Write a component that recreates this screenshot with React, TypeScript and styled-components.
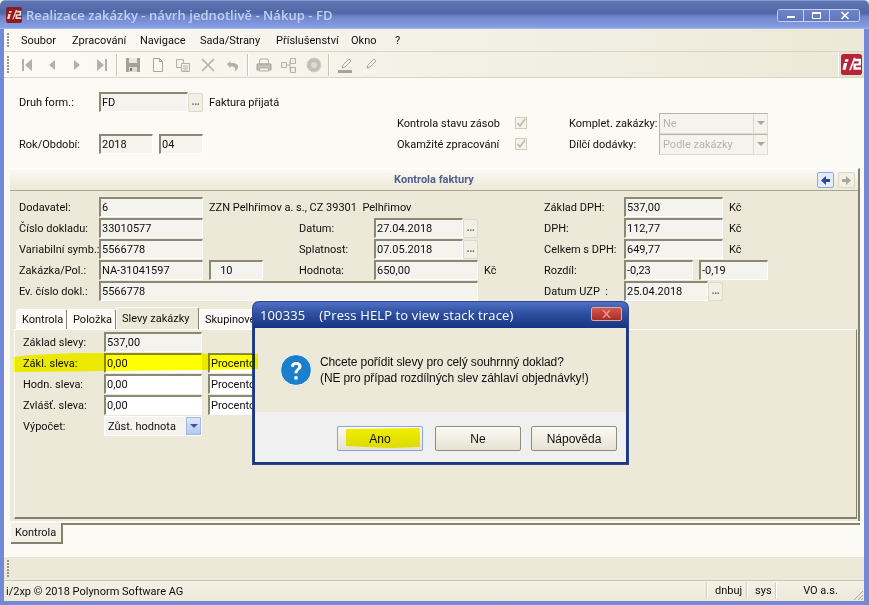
import React from 'react';
import styled, { createGlobalStyle } from 'styled-components';

const Global = createGlobalStyle`
  html, body { margin: 0; padding: 0; overflow: hidden; background: #ece9d8; }
  * { box-sizing: border-box; }
`;

const FONT = `Roboto, "Liberation Sans", sans-serif`;
const DIALOG_FONT = `"Liberation Sans", Arial, sans-serif`;
const FACE = '#ece9d8';
const CREAM = '#fbfaf5';

const Window = styled.div`
  position: relative;
  width: 869px;
  height: 605px;
  display: flex;
  flex-direction: column;
  padding: 0 5px 4px 4px;
  background: #7189d6;
  border-radius: 6px 6px 0 0;
  overflow: hidden;
  font: 11px ${FONT};
  color: #0e0e0e;
`;

const TitleBar = styled.div`
  height: 29px;
  margin: 0 -5px 0 -4px;
  padding: 0 9px 0 6px;
  display: flex;
  align-items: center;
  gap: 4px;
  background: linear-gradient(#5f75b4 0, #5067a6 12px, #6d86cc 16px, #89a0e6 100%);
  border-top: 1px solid #8a9ad0;
  border-bottom: 1px solid #a4b6ec;
`;

const TitleText = styled.div`
  font: 600 13px "Open Sans", sans-serif;
  letter-spacing: 0.05px;
  color: #c3cff2;
  flex: 1;
  white-space: nowrap;
`;

const WindowButtons = styled.div`
  display: flex;
  height: 13px;
  margin-top: 1px;
  border: 1px solid #c6d1f2;
  border-radius: 3px;
  overflow: hidden;
`;

const WindowButton = styled.div<{ $w: number }>`
  width: ${p => p.$w}px;
  display: flex;
  align-items: center;
  justify-content: center;
  background: linear-gradient(#6d84c6, #6078bc);
  & + & { border-left: 1px solid #c6d1f2; }
`;

const MenuBar = styled.div`
  height: 23px;
  display: flex;
  align-items: center;
  background: linear-gradient(90deg, #fbfaf5, #ece9d8);
  border-bottom: 1px solid #d8d5c2;
  padding-left: 3px;
`;

const Grip = styled.div<{ $h: number }>`
  width: 3px;
  height: ${p => p.$h}px;
  background: radial-gradient(circle at 1px 1px, #9a9889 1px, transparent 1.2px) 0 0 / 3px 3px;
  flex: none;
`;

const MenuItem = styled.div<{ $w: number }>`
  width: ${p => p.$w}px;
  white-space: nowrap;
`;

const MenuList = styled.div`
  display: flex;
  margin-left: 11px;
`;

const ToolBar = styled.div`
  height: 26px;
  display: flex;
  align-items: center;
  background: linear-gradient(90deg, #fbfaf5, #ece9d8);
  border-bottom: 1px solid #d8d5c2;
  padding-left: 3px;
`;

const ToolGroup = styled.div<{ $indent?: number }>`
  display: flex;
  align-items: center;
  margin-left: ${p => p.$indent ?? 0}px;
`;

const ToolIcon = styled.div`
  width: 25px;
  height: 24px;
  display: flex;
  align-items: center;
  justify-content: center;
`;

const ToolSep = styled.div`
  width: 2px;
  height: 22px;
  margin: 0 2px;
  background: #c9c6b3;
  border-right: 1px solid #fff;
`;

const ToolEnd = styled.div`
  margin-left: auto;
  width: 26px;
  height: 25px;
  display: flex;
  align-items: center;
  justify-content: center;
  border-left: 1px solid #fff;
  background: #e4e1cf;
`;

const Content = styled.div`
  flex: 1;
  min-height: 0;
  background: ${CREAM};
  padding-top: 14px;
  display: flex;
  flex-direction: column;
`;

const TopForm = styled.div`
  display: grid;
  margin-left: 15px;
  grid-template-columns: 80px 298px 172px 90px 109px;
  grid-template-rows: repeat(3, 21px);
`;

const Slot = styled.div<{ $col: string; $row?: number }>`
  grid-column: ${p => p.$col};
  ${p => (p.$row ? `grid-row: ${p.$row};` : '')}
  height: 20px;
  display: flex;
  align-items: center;
  gap: 6px;
  white-space: pre;
  min-width: 0;
`;

const Field = styled.div<{ $w?: number; $bg?: string }>`
  ${p => (p.$w ? `width: ${p.$w}px;` : 'flex: 1;')}
  height: 20px;
  min-width: 0;
  flex-shrink: 0;
  padding-left: 1px;
  display: flex;
  align-items: center;
  background: ${p => p.$bg ?? '#f4f3ee'};
  border-style: solid;
  border-width: 2px 1px 1px 2px;
  border-color: #8b8976 #fff #fff #8b8976;
  white-space: pre;
  overflow: hidden;
`;

const LookupWrap = styled.div<{ $w?: number }>`
  ${p => (p.$w ? `width: ${p.$w}px;` : 'flex: 1;')}
  display: flex;
  height: 20px;
  flex-shrink: 0;
`;

const LookupButton = styled.div`
  width: 15px;
  height: 19px;
  margin-top: 1px;
  flex: none;
  background: #f1efe6;
  border: 1px solid #dcd9c8;
  border-radius: 2px;
  color: #77756a;
  font-size: 11px;
  font-weight: bold;
  line-height: 16px;
  text-align: center;
  letter-spacing: -0.5px;
`;

const CheckLine = styled.div`
  width: 112px;
  white-space: nowrap;
  flex: none;
`;

const CheckBox = styled.div`
  width: 12px;
  height: 12px;
  border: 1px solid #cfccba;
  background: #f4f3ee;
  flex: none;
  display: flex;
  align-items: center;
  justify-content: center;
`;

const DisabledSelect = styled.div`
  width: 109px;
  height: 21px;
  display: flex;
  align-items: center;
  padding-left: 3px;
  color: #b7b5a8;
  background: #f4f3ee;
  border-style: solid;
  border-width: 1px;
  border-color: #b7b4a0 #e0ddcc #e0ddcc #b7b4a0;
  justify-content: space-between;
`;

const DisabledArrow = styled.div`
  width: 14px;
  height: 19px;
  border-left: 1px solid #dcd9c8;
  display: flex;
  align-items: center;
  justify-content: center;
  &::after {
    content: '';
    border: 4px solid transparent;
    border-top: 4px solid #aaa896;
    margin-top: 4px;
  }
`;

const Panel = styled.div`
  margin: 13px 4px 0 6px;
  height: 353px;
  flex: none;
  background: ${FACE};
  border-right: 2px solid #84826f;
  border-top: 1px solid #fff;
`;

const PanelHeader = styled.div`
  height: 22px;
  position: relative;
  display: flex;
  align-items: center;
  justify-content: center;
  background: linear-gradient(#fbfaf5, #ece9d8);
  border-bottom: 1px solid #a9a793;
  font-weight: bold;
  color: #53608c;
`;

const HeaderNav = styled.div`
  position: absolute;
  right: 3px;
  top: 3px;
  display: flex;
  gap: 4px;
`;

const NavButton = styled.div<{ $active?: boolean }>`
  width: 17px;
  height: 16px;
  display: flex;
  align-items: center;
  justify-content: center;
  border: 1px solid ${p => (p.$active ? '#8faadc' : '#dcd9c8')};
  background: ${p => (p.$active ? '#e4ecfa' : '#f1efe6')};
  border-radius: 2px;
`;

const InvoiceForm = styled.div`
  display: grid;
  margin: 6px 0 0 9px;
  grid-template-columns: 80px 104px 6px 54px 36px 75px 104px 6px 60px 80px 69px 6px 24px 6px 39px;
  grid-template-rows: repeat(5, 21px);
`;

const TabStrip = styled.div`
  display: flex;
  align-items: flex-end;
  height: 22px;
  margin: 5px 0 0 6px;
`;

const Tab = styled.div<{ $active?: boolean; $w: number }>`
  width: ${p => p.$w}px;
  height: ${p => (p.$active ? 22 : 20)}px;
  padding: 0 0 1px 5px;
  display: flex;
  align-items: center;
  white-space: nowrap;
  background: ${p => (p.$active ? FACE : CREAM)};
  border-top: 1px solid #fff;
  border-left: 1px solid #fff;
  border-right: 1px solid #84826f;
  border-radius: 3px 3px 0 0;
`;

const TabPage = styled.div`
  margin: 0 1px 0 4px;
  height: 190px;
  padding: 2px 0 0 8px;
  border-left: 1px solid #fff;
  border-top: 1px solid #fff;
  border-right: 1px solid #84826f;
  border-bottom: 2px solid #84826f;
  display: grid;
  grid-template-columns: 81px 98px 6px 100px;
  grid-template-rows: repeat(5, 21px);
`;

const DropSelect = styled.div`
  width: 98px;
  height: 20px;
  display: flex;
  align-items: center;
  justify-content: space-between;
  padding-left: 3px;
  background: #f4f3ee;
  border: 1px solid #fff;
`;

const DropArrow = styled.div`
  width: 15px;
  height: 18px;
  display: flex;
  align-items: center;
  justify-content: center;
  background: linear-gradient(#dfe8fb, #b5c8f2);
  border: 1px solid #a4b8e4;
  &::after {
    content: '';
    border: 4px solid transparent;
    border-top: 4px solid #3d5696;
    margin-top: 4px;
  }
`;

const BottomTabs = styled.div`
  height: 22px;
  margin: 2px 4px 0 7px;
  display: flex;
  flex: none;
`;

const BottomTab = styled.div`
  width: 52px;
  height: 21px;
  padding-left: 4px;
  display: flex;
  align-items: center;
  background: #f3f1e7;
  border-right: 2px solid #84826f;
  border-bottom: 2px solid #84826f;
`;

const BottomRule = styled.div`
  flex: 1;
  height: 2px;
  background: #84826f;
`;

const Band = styled.div`
  height: 25px;
  flex: none;
  padding: 3px 0 0 3px;
  background: ${FACE};
  border-top: 1px solid #fff;
  border-bottom: 1px solid #c9c6b3;
`;

const StatusBar = styled.div`
  height: 20px;
  flex: none;
  display: flex;
  align-items: center;
  padding-left: 2px;
  position: relative;
  background: linear-gradient(#f4f2e8, #ece9d8);
`;

const StatusCopy = styled.div`
  flex: 1;
`;

const StatusCell = styled.div<{ $w: number; $center?: boolean }>`
  width: ${p => p.$w}px;
  height: 16px;
  line-height: 15px;
  border-left: 1px solid #fff;
  box-shadow: -1px 0 0 #d0cdba;
  text-align: ${p => (p.$center ? 'center' : 'left')};
  padding-left: ${p => (p.$center ? 0 : 7)}px;
`;

const SizeGrip = styled.svg`
  position: absolute;
  right: 0;
  bottom: 0;
`;

const Dialog = styled.div`
  position: absolute;
  left: 253px;
  top: 302px;
  width: 375px;
  height: 162px;
  display: flex;
  flex-direction: column;
  background: #1d3880;
  border-radius: 6px 6px 0 0;
  box-shadow: 0 0 0 1px #30468e;
  padding: 0 2px 2px;
  z-index: 5;
  font: 12px ${DIALOG_FONT};
`;

const DialogTitle = styled.div`
  height: 26px;
  flex: none;
  margin: 0 -2px;
  padding: 0 6px 0 7px;
  display: flex;
  align-items: center;
  justify-content: space-between;
  border-radius: 6px 6px 0 0;
  background: linear-gradient(#4f70c6, #2e4f9e 45%, #173384);
`;

const DialogCaption = styled.div`
  color: #fff;
  font: 500 13px "Open Sans", sans-serif;
  letter-spacing: 0.12px;
  white-space: pre;
`;

const CloseButton = styled.div`
  width: 31px;
  height: 14px;
  margin-top: -2px;
  border-radius: 2px;
  border: 1px solid #e0a8a0;
  display: flex;
  align-items: center;
  justify-content: center;
  background: linear-gradient(#d25a50, #a82c22);
`;

const DialogBody = styled.div`
  height: 84px;
  flex: none;
  display: flex;
  align-items: center;
  gap: 8px;
  padding-left: 25px;
  background: ${FACE};
`;

const DialogText = styled.div`
  line-height: 16px;
  white-space: nowrap;
  letter-spacing: -0.11px;
`;

const DialogFooter = styled.div`
  flex: 1;
  display: flex;
  justify-content: flex-end;
  padding: 14px 9px 0 0;
  background: #f0f0f0;
`;

const DialogButton = styled.div<{ $default?: boolean; $gap?: number }>`
  width: 86px;
  height: 25px;
  margin-right: ${p => p.$gap ?? 0}px;
  display: flex;
  align-items: center;
  justify-content: center;
  border-radius: 2px;
  border: 1px solid ${p => (p.$default ? '#8aa4d8' : '#8e8c7c')};
  background: linear-gradient(#fbfaf4, #e6e3d4);
`;

const Marker = styled.svg<{ $x: number; $y: number }>`
  position: absolute;
  left: ${p => p.$x}px;
  top: ${p => p.$y}px;
  mix-blend-mode: multiply;
  z-index: 6;
  pointer-events: none;
`;

const Logo = ({ size, bg, fg = '#fff' }: { size: number; bg: string; fg?: string }) => (
  <svg width={size} height={size} viewBox="0 0 22 22">
    <rect width="22" height="22" rx="3" fill={bg} />
    <path d="M3 9.5h3.5l-1.6 7H1.500zM4.500 5.500H8L7.400 8H3.900zM8.500 17l5-13h1.800l-5 13z" fill={fg} />
    <path d="M13.500 5H21v7h-5.500v2H21v2.500h-8V10h5.500V7.500h-5z" fill={fg} />
  </svg>
);

const Gray = '#b3b1a6';

const iconPaths: Record<string, React.ReactNode> = {
  first: <path d="M3 2h2v12H3zM13 2v12L6 8z" fill={Gray} />,
  prev: <path d="M11 3v10L5 8z" fill={Gray} />,
  next: <path d="M5 3v10l6-5z" fill={Gray} />,
  last: <path d="M3 2v12l7-6zM11 2h2v12h-2z" fill={Gray} />,
  save: (
    <>
      <path d="M1 1h14v14H1z" fill="#a4a298" />
      <path d="M4 1h8v5H4z" fill="#e9e8e0" />
      <path d="M4 10h8v5H4z" fill="#dedcd2" />
      <path d="M5 11h2v3H5z" fill="#77756b" />
    </>
  ),
  doc: <path d="M3.500 1.500h6l3 3v10h-9zM9.500 1.500v3h3" fill="#fbfbf6" stroke="#a8a69a" />,
  copy: (
    <>
      <path d="M1.500 2.500h7v8h-7z" fill="#f5f4ee" stroke={Gray} />
      <path d="M6.500 6.500h8v8h-8z" fill="#f5f4ee" stroke={Gray} />
      <path d="M8 9h5M8 11h5M8 13h5" stroke={Gray} />
    </>
  ),
  cross: <path d="M2 2l12 12M14 2L2 14" stroke={Gray} strokeWidth="1.6" fill="none" />,
  undo: <path d="M2 7l3.500-3v2C10 5.500 13.500 7 13 10.500c-.3 2-1.500 3-3.500 3.800 1.500-1.500 1.600-5-4-5v2z" fill={Gray} />,
  print: (
    <>
      <path d="M4 2h8l1 5H3z" fill="#f2f1ea" stroke={Gray} />
      <path d="M1 7h14v6H1z" fill="#c2c0b5" stroke="#a6a49a" />
      <path d="M3.500 11h9v3h-9z" fill="#f2f1ea" stroke={Gray} />
    </>
  ),
  tree: (
    <>
      <path d="M5 8h4M9 4v9" stroke={Gray} />
      <path d="M.5 5.500h5v5h-5zM9.500 1.500h5v5h-5zM9.500 10.500h5v5h-5z" fill="#f0efe8" stroke={Gray} />
    </>
  ),
  gear: (
    <>
      <circle cx="8" cy="8" r="7" fill="#c2c0b5" stroke="#d2d0c5" strokeDasharray="2 1" />
      <circle cx="8" cy="8" r="3" fill="#dedcd2" />
    </>
  ),
  pencilDark: (
    <>
      <path d="M1 13h14v3H1z" fill="#a6a498" />
      <path d="M5 11l1-3 6-6 2 2-6 6z" fill="#f4f3ec" stroke="#97958a" strokeWidth=".8" />
    </>
  ),
  pencilLight: (
    <>
      <path d="M1 13h14v3H1z" fill="#f8f8f3" />
      <path d="M5 11l1-3 6-6 2 2-6 6z" fill="#f4f3ec" stroke="#97958a" strokeWidth=".8" />
    </>
  ),
};

const ToolButton = ({ name, size = 16 }: { name: string; size?: number }) => (
  <ToolIcon>
    <svg width={size} height={size} viewBox="0 0 16 16">{iconPaths[name]}</svg>
  </ToolIcon>
);

const Check = () => (
  <svg width="10" height="10" viewBox="0 0 10 10">
    <path d="M1.500 5l2.500 3 5-7" fill="none" stroke="#bdbaa8" strokeWidth="1.6" />
  </svg>
);

const Lookup = ({ value, w }: { value: string; w?: number }) => (
  <LookupWrap $w={w}>
    <Field>{value}</Field>
    <LookupButton>...</LookupButton>
  </LookupWrap>
);

const menus: [string, number][] = [
  ['Soubor', 51], ['Zpracování', 68], ['Navigace', 60], ['Sada/Strany', 76],
  ['Příslušenství', 75], ['Okno', 44], ['?', 10],
];

export default function App() {
  return (
    <Window>
      <Global />
      <TitleBar>
        <Logo size={16} bg="#8e1a22" fg="#ecd9cc" />
        <TitleText>Realizace zakázky - návrh jednotlivě - Nákup - FD</TitleText>
        <WindowButtons>
          <WindowButton $w={25}>
            <svg width="10" height="8"><rect x="1" y="5" width="8" height="2" fill="#fff" /></svg>
          </WindowButton>
          <WindowButton $w={26}>
            <svg width="11" height="9"><path d="M1.500 1.500h8v6h-8z" fill="none" stroke="#fff" /><path d="M1 1h9v2H1z" fill="#fff" /></svg>
          </WindowButton>
          <WindowButton $w={30}>
            <svg width="10" height="9"><path d="M1.500 1l7 7M8.500 1l-7 7" stroke="#fff" strokeWidth="1.6" /></svg>
          </WindowButton>
        </WindowButtons>
      </TitleBar>

      <MenuBar>
        <Grip $h={15} />
        <MenuList>
          {menus.map(([label, w]) => <MenuItem key={label} $w={w}>{label}</MenuItem>)}
        </MenuList>
      </MenuBar>

      <ToolBar>
        <Grip $h={18} />
        <ToolGroup $indent={4}>
          {['first', 'prev', 'next', 'last'].map(n => <ToolButton key={n} name={n} />)}
        </ToolGroup>
        <ToolSep />
        <ToolGroup>
          {['save', 'doc', 'copy', 'cross', 'undo'].map(n => <ToolButton key={n} name={n} />)}
        </ToolGroup>
        <ToolSep />
        <ToolGroup>
          {['print', 'tree', 'gear'].map(n => <ToolButton key={n} name={n} />)}
        </ToolGroup>
        <ToolSep />
        <ToolGroup>
          {['pencilDark', 'pencilLight'].map(n => <ToolButton key={n} name={n} />)}
        </ToolGroup>
        <ToolEnd><Logo size={21} bg="#b7243a" /></ToolEnd>
      </ToolBar>

      <Content>
        <TopForm>
          <Slot $col="1" $row={1}>Druh form.:</Slot>
          <Slot $col="2" $row={1}>
            <Lookup value="FD" w={104} />
            Faktura přijatá
          </Slot>
          <Slot $col="3" $row={2}><CheckLine>Kontrola stavu zásob</CheckLine><CheckBox><Check /></CheckBox></Slot>
          <Slot $col="4" $row={2}>Komplet. zakázky:</Slot>
          <Slot $col="5" $row={2}><DisabledSelect>Ne<DisabledArrow /></DisabledSelect></Slot>
          <Slot $col="1" $row={3}>Rok/Období:</Slot>
          <Slot $col="2" $row={3}><Field $w={54}>2018</Field><Field $w={44}>04</Field></Slot>
          <Slot $col="3" $row={3}><CheckLine>Okamžité zpracování</CheckLine><CheckBox><Check /></CheckBox></Slot>
          <Slot $col="4" $row={3}>Dílčí dodávky:</Slot>
          <Slot $col="5" $row={3}><DisabledSelect>Podle zakázky<DisabledArrow /></DisabledSelect></Slot>
        </TopForm>

        <Panel>
          <PanelHeader>
            Kontrola faktury
            <HeaderNav>
              <NavButton $active>
                <svg width="11" height="11"><path d="M6 1v3h4v3H6v3L1 5.500z" fill="#27489c" /></svg>
              </NavButton>
              <NavButton>
                <svg width="11" height="11"><path d="M5 1v3H1v3h4v3l5-4.500z" fill="#aaa896" /></svg>
              </NavButton>
            </HeaderNav>
          </PanelHeader>

          <InvoiceForm>
            <Slot $col="1">Dodavatel:</Slot>
            <Slot $col="2"><Field>6</Field></Slot>
            <Slot $col="4 / 8">ZZN Pelhřimov a. s., CZ 39301  Pelhřimov</Slot>
            <Slot $col="10">Základ DPH:</Slot>
            <Slot $col="11 / 14"><Field>537,00</Field></Slot>
            <Slot $col="15">Kč</Slot>

            <Slot $col="1">Číslo dokladu:</Slot>
            <Slot $col="2"><Field>33010577</Field></Slot>
            <Slot $col="6">Datum:</Slot>
            <Slot $col="7"><Lookup value="27.04.2018" /></Slot>
            <Slot $col="10">DPH:</Slot>
            <Slot $col="11 / 14"><Field>112,77</Field></Slot>
            <Slot $col="15">Kč</Slot>

            <Slot $col="1">Variabilní symb.:</Slot>
            <Slot $col="2"><Field>5566778</Field></Slot>
            <Slot $col="6">Splatnost:</Slot>
            <Slot $col="7"><Lookup value="07.05.2018" /></Slot>
            <Slot $col="10">Celkem s DPH:</Slot>
            <Slot $col="11 / 14"><Field>649,77</Field></Slot>
            <Slot $col="15">Kč</Slot>

            <Slot $col="1">Zakázka/Pol.:</Slot>
            <Slot $col="2"><Field>NA-31041597</Field></Slot>
            <Slot $col="4"><Field>{'   10'}</Field></Slot>
            <Slot $col="6">Hodnota:</Slot>
            <Slot $col="7"><Field>650,00</Field></Slot>
            <Slot $col="9">Kč</Slot>
            <Slot $col="10">Rozdíl:</Slot>
            <Slot $col="11"><Field>-0,23</Field></Slot>
            <Slot $col="13 / 16"><Field>-0,19</Field></Slot>

            <Slot $col="1">Ev. číslo dokl.:</Slot>
            <Slot $col="2 / 8"><Field>5566778</Field></Slot>
            <Slot $col="10">Datum UZP  :</Slot>
            <Slot $col="11 / 14"><Lookup value="25.04.2018" /></Slot>
          </InvoiceForm>

          <TabStrip>
            <Tab $w={51}>Kontrola</Tab>
            <Tab $w={49}>Položka</Tab>
            <Tab $w={83} $active>Slevy zakázky</Tab>
            <Tab $w={60}>Skupinové</Tab>
          </TabStrip>
          <TabPage>
            <Slot $col="1">Základ slevy:</Slot>
            <Slot $col="2"><Field>537,00</Field></Slot>

            <Slot $col="1">Zákl. sleva:</Slot>
            <Slot $col="2"><Field $bg="#fff">0,00</Field></Slot>
            <Slot $col="4"><Field $bg="#fff">Procento</Field></Slot>

            <Slot $col="1">Hodn. sleva:</Slot>
            <Slot $col="2"><Field $bg="#fff">0,00</Field></Slot>
            <Slot $col="4"><Field $bg="#fff">Procento</Field></Slot>

            <Slot $col="1">Zvlášť. sleva:</Slot>
            <Slot $col="2"><Field $bg="#fff">0,00</Field></Slot>
            <Slot $col="4"><Field $bg="#fff">Procento</Field></Slot>

            <Slot $col="1">Výpočet:</Slot>
            <Slot $col="2"><DropSelect>Zůst. hodnota<DropArrow /></DropSelect></Slot>
          </TabPage>
        </Panel>

        <BottomTabs>
          <BottomTab>Kontrola</BottomTab>
          <BottomRule />
        </BottomTabs>
      </Content>

      <Band><Grip $h={18} /></Band>

      <StatusBar>
        <StatusCopy>i/2xp © 2018 Polynorm Software AG</StatusCopy>
        <StatusCell $w={40}>dnbuj</StatusCell>
        <StatusCell $w={29}>sys</StatusCell>
        <StatusCell $w={88} $center>VO a.s.</StatusCell>
        <SizeGrip width="11" height="11">
          <path d="M10 1L1 10M10 5l-5 5M10 8l-2 2" stroke="#a9a793" fill="none" />
        </SizeGrip>
      </StatusBar>

      <Dialog>
        <DialogTitle>
          <DialogCaption>100335    (Press HELP to view stack trace)</DialogCaption>
          <CloseButton>
            <svg width="9" height="8"><path d="M1 0l7 8M8 0L1 8" stroke="#e89a90" strokeWidth="1.4" /></svg>
          </CloseButton>
        </DialogTitle>
        <DialogBody>
          <svg width="32" height="32" viewBox="0 0 32 32">
            <circle cx="16" cy="16" r="15.500" fill="#1b7fcc" stroke="#fff" />
            <path d="M11 12.500c0-3 2.300-4.500 5.200-4.500 3 0 5.300 1.600 5.300 4.300 0 3.700-4 3.500-4 7h-3c0-4.300 3.700-4.300 3.700-6.800 0-1-.8-1.700-2-1.700-1.300 0-2.200.8-2.300 2.200z" fill="#fff" />
            <circle cx="16" cy="23.800" r="1.900" fill="#fff" />
          </svg>
          <DialogText>
            Chcete pořídit slevy pro celý souhrnný doklad?<br />
            (NE pro případ rozdílných slev záhlaví objednávky!)
          </DialogText>
        </DialogBody>
        <DialogFooter>
          <DialogButton $default $gap={12}>Ano</DialogButton>
          <DialogButton $gap={10}>Ne</DialogButton>
          <DialogButton>Nápověda</DialogButton>
        </DialogFooter>
      </Dialog>

      <Marker $x={13} $y={352} width="246" height="21">
        <path d="M1 5L18 3L64 1L245 2L245 17L190 18L95 19L1 20z" fill="#ffff00" />
      </Marker>
      <Marker $x={344} $y={427} width="78" height="24">
        <path d="M2 2L76 1L76 20L45 21L2 19z" fill="#f4f400" />
      </Marker>
    </Window>
  );
}
